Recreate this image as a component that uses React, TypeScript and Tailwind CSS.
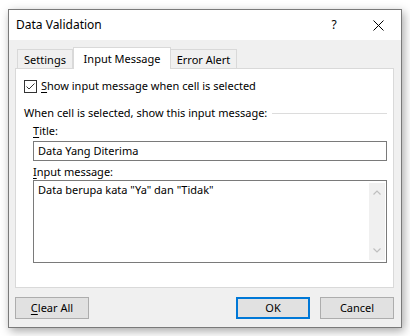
import React from 'react';

const font = { fontFamily: '"Noto Sans", "Open Sans", sans-serif' };

const Tab: React.FC<{ label: string; active?: boolean; className?: string }> = ({ label, active, className = '' }) => {
  if (active) {
    return (
      <div className={`relative z-10 -mb-px flex h-[22px] items-start justify-center border border-b-0 border-[#d9d9d9] bg-white pt-[3px] ${className}`}>
        {label}
      </div>
    );
  }
  return (
    <div className={`flex h-[19px] items-start justify-center border-t border-[#d9d9d9] bg-[#f0f0f0] pt-[2px] ${className}`}>
      {label}
    </div>
  );
};

const Button: React.FC<{ children: React.ReactNode; primary?: boolean }> = ({ children, primary }) => (
  <button
    className={`flex h-[22px] w-[74px] items-center justify-center bg-[#e1e1e1] text-black ${
      primary ? 'border-2 border-[#0078d7]' : 'border border-[#adadad]'
    }`}
  >
    {children}
  </button>
);

export default function App() {
  return (
    <div className="h-[336px] w-[410px] bg-white pl-[8px] pt-[9px] text-[11px] text-black" style={font}>
      <div className="flex h-[319px] w-[394px] flex-col border border-[#7a7a7a] bg-[#f0f0f0] shadow-[2px_3px_9px_rgba(0,0,0,0.35)]">
        {/* Title bar */}
        <div className="flex h-[30px] items-center bg-white pl-[7px] text-[12px]">
          <span className="flex-1">Data Validation</span>
          <span className="w-[20px] text-center">?</span>
          <div className="ml-[27px] mr-[16px] flex h-[30px] w-[14px] items-center justify-center">
            <svg width="11" height="11" viewBox="0 0 11 11">
              <path d="M0.5 0.5 L10.5 10.5 M10.5 0.5 L0.5 10.5" stroke="#000" strokeWidth="1" />
            </svg>
          </div>
        </div>

        <div className="ml-[6px] mt-[7px] w-[379px]">
          {/* Tabs */}
          <div className="flex items-end pl-[2px]">
            <Tab label="Settings" className="w-[56px] border-l border-r" />
            <Tab label="Input Message" active className="w-[98px]" />
            <Tab label="Error Alert" className="w-[66px] border-r" />
          </div>

          {/* Panel */}
          <div className="flex h-[220px] flex-col border border-[#d9d9d9] bg-white">
            <div className="ml-[8px] mt-[9px] flex h-[16px] items-center">
              <div className="flex h-[13px] w-[13px] items-center justify-center border border-[#333] bg-white">
                <svg width="11" height="11" viewBox="0 0 11 11">
                  <path d="M1.5 5.5 L4 8 L9.5 2.5" stroke="#333" strokeWidth="1" fill="none" />
                </svg>
              </div>
              <span className="ml-[4px]">
                <span className="underline underline-offset-2">S</span>how input message when cell is selected
              </span>
            </div>

            <div className="ml-[8px] mr-[6px] mt-[11px] flex h-[16px] items-center">
              <span>When cell is selected, show this input message:</span>
              <div className="ml-[5px] h-px flex-1 bg-[#dcdcdc]" />
            </div>

            <div className="ml-[17px] mr-[6px] flex flex-col">
              <div className="mt-[2px] flex h-[16px] items-center">
                <span>
                  <span className="underline underline-offset-2">T</span>itle:
                </span>
              </div>
              <div className="mt-[2px] flex h-[20px] items-center border border-[#7a7a7a] bg-white pl-[4px]">
                Data Yang Diterima
              </div>
              <div className="mt-[3px] flex h-[16px] items-center">
                <span>
                  <span className="underline underline-offset-2">I</span>nput message:
                </span>
              </div>
              <div className="flex h-[83px] border border-[#7a7a7a] bg-white">
                <div className="flex-1 pl-[4px] pt-[1px]">Data berupa kata "Ya" dan "Tidak"</div>
                <div className="my-[2px] mr-px flex w-[16px] flex-col items-center justify-between bg-[#f0f0f0] py-[7px]">
                  <svg width="8" height="5" viewBox="0 0 8 5">
                    <path d="M0.5 4.5 L4 1 L7.5 4.5" stroke="#bfbfbf" strokeWidth="1.2" fill="none" />
                  </svg>
                  <svg width="8" height="5" viewBox="0 0 8 5">
                    <path d="M0.5 0.5 L4 4 L7.5 0.5" stroke="#bfbfbf" strokeWidth="1.2" fill="none" />
                  </svg>
                </div>
              </div>
            </div>
          </div>

          {/* Buttons */}
          <div className="mt-[9px] flex">
            <Button>
              <span>
                <span className="underline underline-offset-2">C</span>lear All
              </span>
            </Button>
            <div className="flex-1" />
            <Button primary>OK</Button>
            <div className="w-[10px]" />
            <Button>Cancel</Button>
          </div>
        </div>
      </div>
    </div>
  );
}
